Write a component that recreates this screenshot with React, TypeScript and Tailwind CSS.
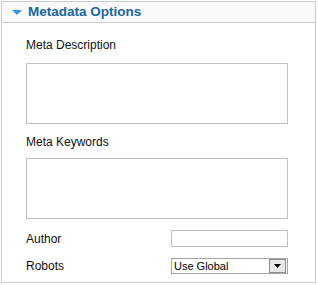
import { useState } from "react";

export default function App() {
  const [robots, setRobots] = useState("Use Global");

  return (
    <div className="pt-[1px] pl-[1px] bg-white w-[318px] h-[285px]" style={{ fontFamily: '"Liberation Sans", Arial, sans-serif' }}>
      <div className="w-[315px] h-[282px] border border-[#cccccc] bg-white">
        <div className="h-[21px] bg-[#f9f9f9] border-b border-[#cccccc] flex items-center pl-[10px]">
          <svg width="10" height="5" viewBox="0 0 10 5" className="mr-[6px]">
            <polygon points="0,0 10,0 5,5" fill="#2e9be0" />
          </svg>
          <span className="text-[13.5px] font-bold text-[#1a66a6] leading-none">Metadata Options</span>
        </div>

        <div className="pl-[24px] pt-[15px]">
          <label className="block text-[12px] leading-[14px] text-[#111]">Meta Description</label>
          <textarea className="block mt-[11px] w-[262px] h-[61px] border border-[#c0c0c0] resize-none outline-none" />

          <label className="block mt-[11px] text-[12px] leading-[14px] text-[#111]">Meta Keywords</label>
          <textarea className="block mt-[9px] w-[262px] h-[61px] border border-[#c0c0c0] resize-none outline-none" />

          <div className="flex items-center mt-[11px] h-[17px]">
            <span className="w-[145px] text-[12px] leading-[14px] text-[#111]">Author</span>
            <input className="w-[117px] h-[17px] border border-[#c0c0c0] outline-none" />
          </div>

          <div className="flex items-center mt-[11px] h-[16px]">
            <span className="w-[145px] text-[12px] leading-[14px] text-[#111]">Robots</span>
            <div className="relative w-[117px] h-[16px] border border-[#a5a5a5] bg-white flex items-center">
              <span className="pl-[2px] text-[11px] leading-none text-[#000]">{robots}</span>
              <div className="absolute right-[1px] top-[0px] w-[17px] h-[14px] bg-[#e8e8e8] border border-[#8e8e8e] flex items-center justify-center">
                <svg width="7" height="4" viewBox="0 0 7 4">
                  <polygon points="0,0 7,0 3.5,4" fill="#000" />
                </svg>
              </div>
              <select
                value={robots}
                onChange={(e) => setRobots(e.target.value)}
                className="absolute inset-0 opacity-0"
              >
                <option>Use Global</option>
                <option>index, follow</option>
                <option>noindex, follow</option>
                <option>index, nofollow</option>
                <option>noindex, nofollow</option>
              </select>
            </div>
          </div>
        </div>
      </div>
    </div>
  );
}
